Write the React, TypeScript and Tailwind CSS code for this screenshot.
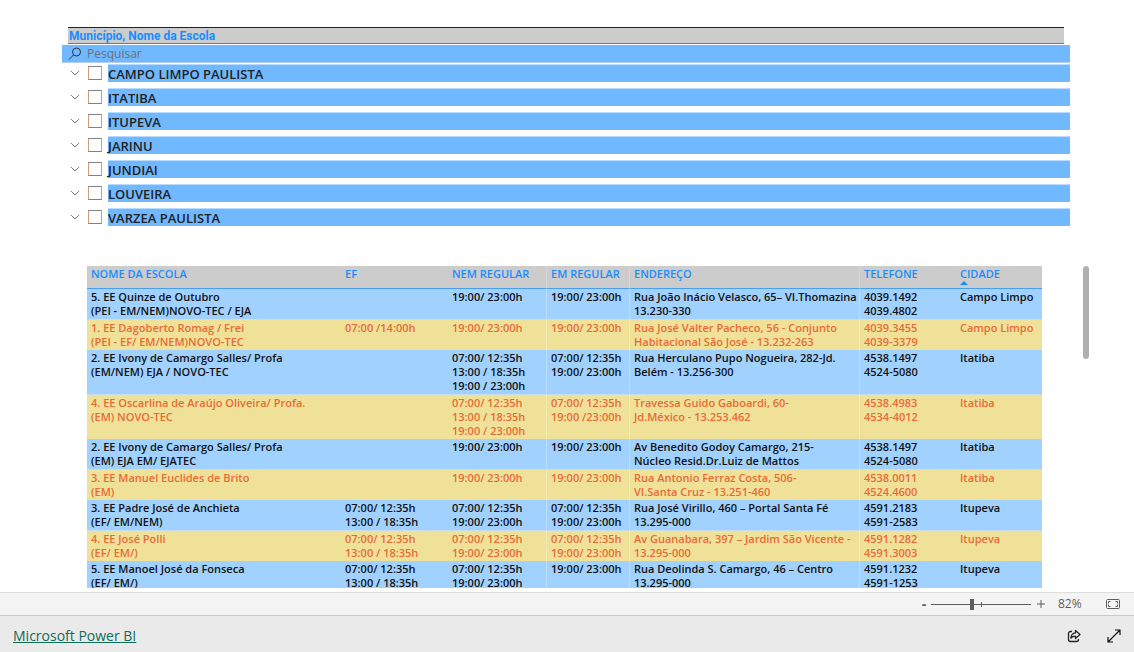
import React, { useState } from 'react';

interface School {
  name: string[];
  ef: string[];
  nem: string[];
  em: string[];
  address: string[];
  phone: string[];
  city: string;
}

const cities = [
  'CAMPO LIMPO PAULISTA',
  'ITATIBA',
  'ITUPEVA',
  'JARINU',
  'JUNDIAI',
  'LOUVEIRA',
  'VARZEA PAULISTA',
];

const columns = [
  { title: 'NOME DA ESCOLA', width: 'w-[254px]' },
  { title: 'EF', width: 'w-[107px]' },
  { title: 'NEM REGULAR', width: 'w-[99px]' },
  { title: 'EM REGULAR', width: 'w-[83px]' },
  { title: 'ENDEREÇO', width: '' },
  { title: 'TELEFONE', width: 'w-[96px]' },
  { title: 'CIDADE', width: 'w-[86px]' },
];

const schools: School[] = [
  {
    name: ['5. EE Quinze de Outubro', '(PEI - EM/NEM)NOVO-TEC / EJA'],
    ef: [],
    nem: ['19:00/ 23:00h'],
    em: ['19:00/ 23:00h'],
    address: ['Rua João Inácio Velasco, 65– VI.Thomazina', '13.230-330'],
    phone: ['4039.1492', '4039.4802'],
    city: 'Campo Limpo',
  },
  {
    name: ['1. EE Dagoberto Romag / Frei', '(PEI - EF/ EM/NEM)NOVO-TEC'],
    ef: ['07:00 /14:00h'],
    nem: ['19:00/ 23:00h'],
    em: ['19:00/ 23:00h'],
    address: ['Rua José Valter Pacheco, 56 - Conjunto', 'Habitacional São José - 13.232-263'],
    phone: ['4039.3455', '4039-3379'],
    city: 'Campo Limpo',
  },
  {
    name: ['2. EE Ivony de Camargo Salles/ Profa', '(EM/NEM) EJA / NOVO-TEC'],
    ef: [],
    nem: ['07:00/ 12:35h', '13:00 / 18:35h', '19:00 / 23:00h'],
    em: ['07:00/ 12:35h', '19:00/ 23:00h'],
    address: ['Rua Herculano Pupo Nogueira, 282-Jd.', 'Belém - 13.256-300'],
    phone: ['4538.1497', '4524-5080'],
    city: 'Itatiba',
  },
  {
    name: ['4. EE Oscarlina de Araújo Oliveira/ Profa.', '(EM) NOVO-TEC'],
    ef: [],
    nem: ['07:00/ 12:35h', '13:00 / 18:35h', '19:00 / 23:00h'],
    em: ['07:00/ 12:35h', '19:00 /23:00h'],
    address: ['Travessa Guido Gaboardi, 60-', 'Jd.México - 13.253.462'],
    phone: ['4538.4983', '4534-4012'],
    city: 'Itatiba',
  },
  {
    name: ['2. EE Ivony de Camargo Salles/ Profa', '(EM) EJA EM/ EJATEC'],
    ef: [],
    nem: ['19:00/ 23:00h'],
    em: ['19:00/ 23:00h'],
    address: ['Av Benedito Godoy Camargo, 215-', 'Núcleo Resid.Dr.Luiz de Mattos'],
    phone: ['4538.1497', '4524-5080'],
    city: 'Itatiba',
  },
  {
    name: ['3. EE Manuel Euclides de Brito', '(EM)'],
    ef: [],
    nem: ['19:00/ 23:00h'],
    em: ['19:00/ 23:00h'],
    address: ['Rua Antonio Ferraz Costa, 506-', 'VI.Santa Cruz - 13.251-460'],
    phone: ['4538.0011', '4524.4600'],
    city: 'Itatiba',
  },
  {
    name: ['3. EE Padre José de Anchieta', '(EF/ EM/NEM)'],
    ef: ['07:00/ 12:35h', '13:00 / 18:35h'],
    nem: ['07:00/ 12:35h', '19:00/ 23:00h'],
    em: ['07:00/ 12:35h', '19:00/ 23:00h'],
    address: ['Rua José Virillo, 460 – Portal Santa Fé', '13.295-000'],
    phone: ['4591.2183', '4591-2583'],
    city: 'Itupeva',
  },
  {
    name: ['4. EE José Polli', '(EF/ EM/)'],
    ef: ['07:00/ 12:35h', '13:00 / 18:35h'],
    nem: ['07:00/ 12:35h', '19:00/ 23:00h'],
    em: ['07:00/ 12:35h', '19:00/ 23:00h'],
    address: ['Av Guanabara, 397 – Jardim São Vicente -', '13.295-000'],
    phone: ['4591.1282', '4591.3003'],
    city: 'Itupeva',
  },
  {
    name: ['5. EE Manoel José da Fonseca', '(EF/ EM/)'],
    ef: ['07:00/ 12:35h', '13:00 / 18:35h'],
    nem: ['07:00/ 12:35h', '19:00/ 23:00h'],
    em: ['19:00/ 23:00h'],
    address: ['Rua Deolinda S. Camargo, 46 – Centro', '13.295-000'],
    phone: ['4591.1232', '4591-1253'],
    city: 'Itupeva',
  },
];

const Lines: React.FC<{ items: string[] }> = ({ items }) => (
  <>
    {items.map((line, index) => (
      <span key={index} className="block whitespace-nowrap">
        {line}
      </span>
    ))}
  </>
);

const CitySlicer: React.FC = () => {
  const [selected, setSelected] = useState<string[]>([]);

  const toggle = (city: string) =>
    setSelected(selected.includes(city) ? selected.filter((c) => c !== city) : [...selected, city]);

  return (
    <section className="mr-16 ml-[62px]">
      <h2 className="mx-1.5 h-[17px] border-t border-b border-t-[#222222] border-b-[#777777] bg-[#cccccc] px-px font-[Roboto,sans-serif] text-xs leading-4 font-bold text-[#1a8cff]">
        Município, Nome da Escola
      </h2>
      <label className="mt-px flex h-[18px] items-center gap-[5px] border-b border-[#b3cfea] bg-[#70b8ff] pl-1.5">
        <svg viewBox="0 0 14 14" className="size-3.5" fill="none" stroke="#333333">
          <circle cx="8.5" cy="5" r="4" />
          <path d="M5.5 8L1 12.5" />
        </svg>
        <input
          type="text"
          aria-label="Pesquisar"
          placeholder="Pesquisar"
          className="min-w-0 flex-1 bg-transparent text-xs leading-4 outline-none placeholder:text-[#707070]"
        />
      </label>
      <ul className="mt-px flex flex-col gap-1.5">
        {cities.map((city) => (
          <li key={city} className="flex h-[18px] items-center">
            <button type="button" aria-label={`Expandir ${city}`} className="flex w-[26px] justify-center">
              <svg viewBox="0 0 10 6" className="h-1.5 w-2.5" fill="none" stroke="#777777">
                <path d="M1 1l4 4 4-4" />
              </svg>
            </button>
            <label className="flex min-w-0 flex-1 items-center gap-1.5">
              <input
                type="checkbox"
                checked={selected.includes(city)}
                onChange={() => toggle(city)}
                className="size-3.5 appearance-none border border-x-[#c99f7c] border-y-[#7f7f7f] bg-white checked:bg-[#70b8ff]"
              />
              <span className="h-[18px] flex-1 border-t border-[#b8dbff] bg-[#70b8ff] text-[13px] leading-[18px] font-semibold text-[#222222]">
                {city}
              </span>
            </label>
          </li>
        ))}
      </ul>
    </section>
  );
};

const SchoolTable: React.FC = () => (
  <section className="mt-10 mr-[45px] mb-1 ml-[87px] flex min-h-0 flex-1 gap-[41px]">
    <div className="min-w-0 flex-1 overflow-hidden">
      <table className="w-full table-fixed border-separate border-spacing-0 text-left text-[11px] leading-[14px] font-semibold">
        <thead>
          <tr className="bg-[#cccccc] text-[#1a8cff] [&>th:nth-child(n+3):nth-child(-n+5)]:border-r [&>th:nth-child(n+3):nth-child(-n+5)]:border-r-[#d8d8d8]">
            {columns.map((column) => (
              <th
                key={column.title}
                className={`h-[23px] border-b border-b-[#4a9eee] px-1 pt-px align-top font-semibold whitespace-nowrap ${column.width}`}
              >
                {column.title}
                {column.title === 'CIDADE' && (
                  <svg viewBox="0 0 8 4" className="h-1 w-2" fill="#1a8cff">
                    <path d="M4 0l4 4H0z" />
                  </svg>
                )}
              </th>
            ))}
          </tr>
        </thead>
        <tbody className="[&_td]:px-1 [&_td]:py-px [&_td]:align-top [&_td:nth-child(n+3):nth-child(-n+5)]:border-r [&_td:nth-child(n+3):nth-child(-n+5)]:border-r-white/30">
          {schools.map((school, index) => (
            <tr
              key={index}
              className={
                index % 2 === 0
                  ? 'bg-[#a0d1ff] text-[#111111] [&>td]:border-b [&>td]:border-b-[#c9dcea]'
                  : 'bg-[#f0e199] text-[#e66c37]'
              }
            >
              <td><Lines items={school.name} /></td>
              <td><Lines items={school.ef} /></td>
              <td><Lines items={school.nem} /></td>
              <td><Lines items={school.em} /></td>
              <td><Lines items={school.address} /></td>
              <td><Lines items={school.phone} /></td>
              <td>{school.city}</td>
            </tr>
          ))}
        </tbody>
      </table>
    </div>
    <div className="h-[93px] w-1.5 rounded-full bg-[#b0b0b0]" />
  </section>
);

const ZoomBar: React.FC = () => {
  const [zoom, setZoom] = useState(82);

  return (
    <div className="flex h-[23px] shrink-0 items-center justify-end border-t border-[#dddddd] bg-[#f4f4f4] pr-3.5 text-[#605e5c]">
      <button type="button" aria-label="Reduzir" onClick={() => setZoom(zoom - 1)} className="w-3.5 text-sm leading-4 font-bold">
        -
      </button>
      <div className="relative flex h-4 w-[100px] items-center">
        <input
          type="range"
          aria-label="Zoom"
          min={0}
          max={200}
          value={zoom}
          onChange={(e) => setZoom(Number(e.target.value))}
          className="h-px w-full appearance-none bg-[#605e5c] [&::-webkit-slider-thumb]:h-[11px] [&::-webkit-slider-thumb]:w-1 [&::-webkit-slider-thumb]:appearance-none [&::-webkit-slider-thumb]:bg-[#605e5c]"
        />
        <span className="pointer-events-none absolute top-1.5 left-1/2 h-[5px] w-px bg-[#605e5c]" />
      </div>
      <button type="button" aria-label="Ampliar" onClick={() => setZoom(zoom + 1)} className="flex w-5 justify-center">
        <svg viewBox="0 0 8 8" className="size-2" stroke="#605e5c">
          <path d="M4 0v8M0 4h8" />
        </svg>
      </button>
      <span className="w-[55px] pl-[7px] text-xs leading-4">{zoom}%</span>
      <button type="button" aria-label="Ajustar à página">
        <svg viewBox="0 0 14 10" className="h-2.5 w-3.5" fill="none" stroke="#605e5c">
          <rect x=".5" y=".5" width="13" height="9" rx="1" />
          <path d="M2.5 4.5V2.5H4.5M9.5 2.5h2v2M11.5 5.5v2h-2M4.5 7.5h-2v-2" />
        </svg>
      </button>
    </div>
  );
};

const Footer: React.FC = () => (
  <footer className="flex h-[37px] shrink-0 items-center justify-between border-t border-[#c8c8c8] bg-[#eaeaea] px-[13px] pt-1">
    <a href="https://powerbi.microsoft.com" className="text-sm leading-5 text-[#116b58] underline">
      Microsoft Power BI
    </a>
    <div className="flex items-center gap-[26px]">
      <button type="button" aria-label="Compartilhar">
        <svg viewBox="0 0 14 14" className="size-3.5" fill="none" stroke="#222222" strokeWidth="1.3" strokeLinejoin="round">
          <path d="M5 2.500H3.500a2 2 0 0 0-2 2v6a2 2 0 0 0 2 2h6a2 2 0 0 0 2-2V10" />
          <path d="M8.500 1.500L13 5.500l-4.500 4V7.200c-2 0-3.500.4-4.600 2 .2-3.300 1.800-5.200 4.600-5.400z" />
        </svg>
      </button>
      <button type="button" aria-label="Tela inteira">
        <svg viewBox="0 0 14 14" className="size-3.5" fill="none" stroke="#111111" strokeWidth="1.2">
          <path d="M1 13L13 1M8 1h5v5M1 8v5h5" />
        </svg>
      </button>
    </div>
  </footer>
);

export default function App() {
  return (
    <div className="flex h-screen flex-col overflow-hidden bg-white font-['Open_Sans','Noto_Sans',sans-serif]">
      <main className="flex min-h-0 flex-1 flex-col pt-[27px]">
        <CitySlicer />
        <SchoolTable />
      </main>
      <ZoomBar />
      <Footer />
    </div>
  );
}
